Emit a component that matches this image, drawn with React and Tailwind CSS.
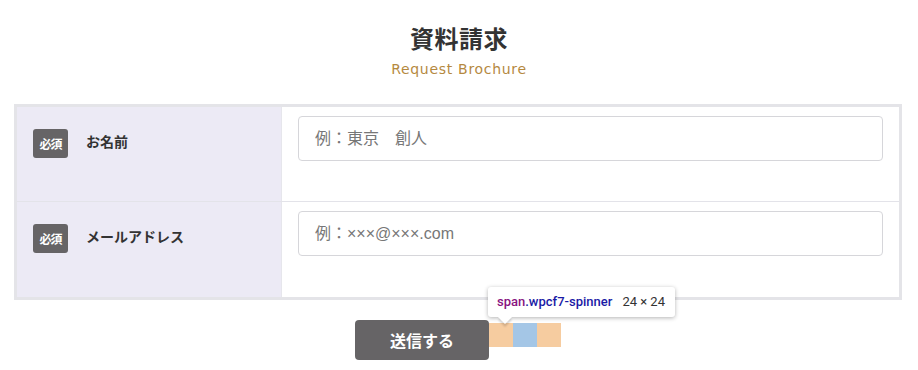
import React from "react";

const jp = { fontFamily: '"Noto Sans CJK JP", "Noto Sans", sans-serif' };

function Row({ label, placeholder, last }) {
  return (
    <div className={`flex h-[95px] ${last ? "" : "border-b border-[#e3e3e9]"}`}>
      <div className="w-[265px] shrink-0 bg-[#eceaf5] border-r border-[#e6e6ec] flex items-start pl-[16px] pt-[22px]">
        <span className="w-[35px] h-[29px] rounded-[3px] bg-[#666466] text-white text-[12px] font-bold tracking-[-0.08em] flex items-center justify-center">
          必須
        </span>
        <span className="ml-[18px] mt-[2px] text-[14px] font-bold text-[#333] leading-[20px]">{label}</span>
      </div>
      <div className="flex-1 bg-white pl-[16px] pr-[16px] pt-[9px]">
        <div
          className="h-[45px] rounded-[4px] border border-[#d6d6da] bg-white flex items-center pl-[16px] text-[16px] text-[#777]"
          style={{ fontFamily: '"Liberation Sans", "Noto Sans CJK JP", sans-serif' }}
        >
          {placeholder}
        </div>
      </div>
    </div>
  );
}

export default function App() {
  return (
    <div className="w-[918px] h-[370px] bg-white overflow-hidden relative" style={jp}>
      <div className="pt-[20px] flex flex-col items-center">
        <h1 className="text-[24px] font-bold text-[#333] leading-[36px] tracking-[0.02em]">資料請求</h1>
        <p
          className="mt-[3px] text-[14px] text-[#b5893f] tracking-[0.05em] leading-[20px]"
          style={{ fontFamily: '"DejaVu Sans", sans-serif' }}
        >
          Request Brochure
        </p>
      </div>
      <div className="ml-[14px] mt-[25px] w-[888px] border-[3px] border-[#e4e4e8]">
        <Row label="お名前" placeholder="例：東京　創人" />
        <Row label="メールアドレス" placeholder="例：×××@×××.com" last />
      </div>
      <div className="mt-[20px] flex justify-center pr-[2px]">
        <div className="flex items-start">
          <button className="w-[134px] h-[40px] rounded-[4px] bg-[#666466] text-white text-[16px] font-bold">
            送信する
          </button>
          <div className="relative flex mt-[3px]">
            <span className="w-[24px] h-[24px] bg-[#f6cca0]" />
            <span className="w-[24px] h-[24px] bg-[#a4c6e6]" />
            <span className="w-[24px] h-[24px] bg-[#f6cca0]" />
            <div className="absolute -left-px bottom-[30px] w-[187px] h-[30px] bg-white rounded-[3px] shadow-[0_1px_4px_rgba(0,0,0,0.3)] flex items-center pl-[9px] pr-[10px] whitespace-nowrap"
              style={{ fontFamily: '"Roboto", "DejaVu Sans", sans-serif' }}>
              <span className="text-[13px] font-medium text-[#881280]">span</span>
              <span className="text-[13px] font-medium text-[#1a1aa6]">.wpcf7-spinner</span>
              <span className="ml-auto text-[13px] text-[#333]">24 × 24</span>
              <span className="absolute left-[12px] -bottom-[5px] w-[10px] h-[10px] bg-white rotate-45 shadow-[2px_2px_2px_rgba(0,0,0,0.15)]" />
            </div>
          </div>
        </div>
      </div>
    </div>
  );
}
